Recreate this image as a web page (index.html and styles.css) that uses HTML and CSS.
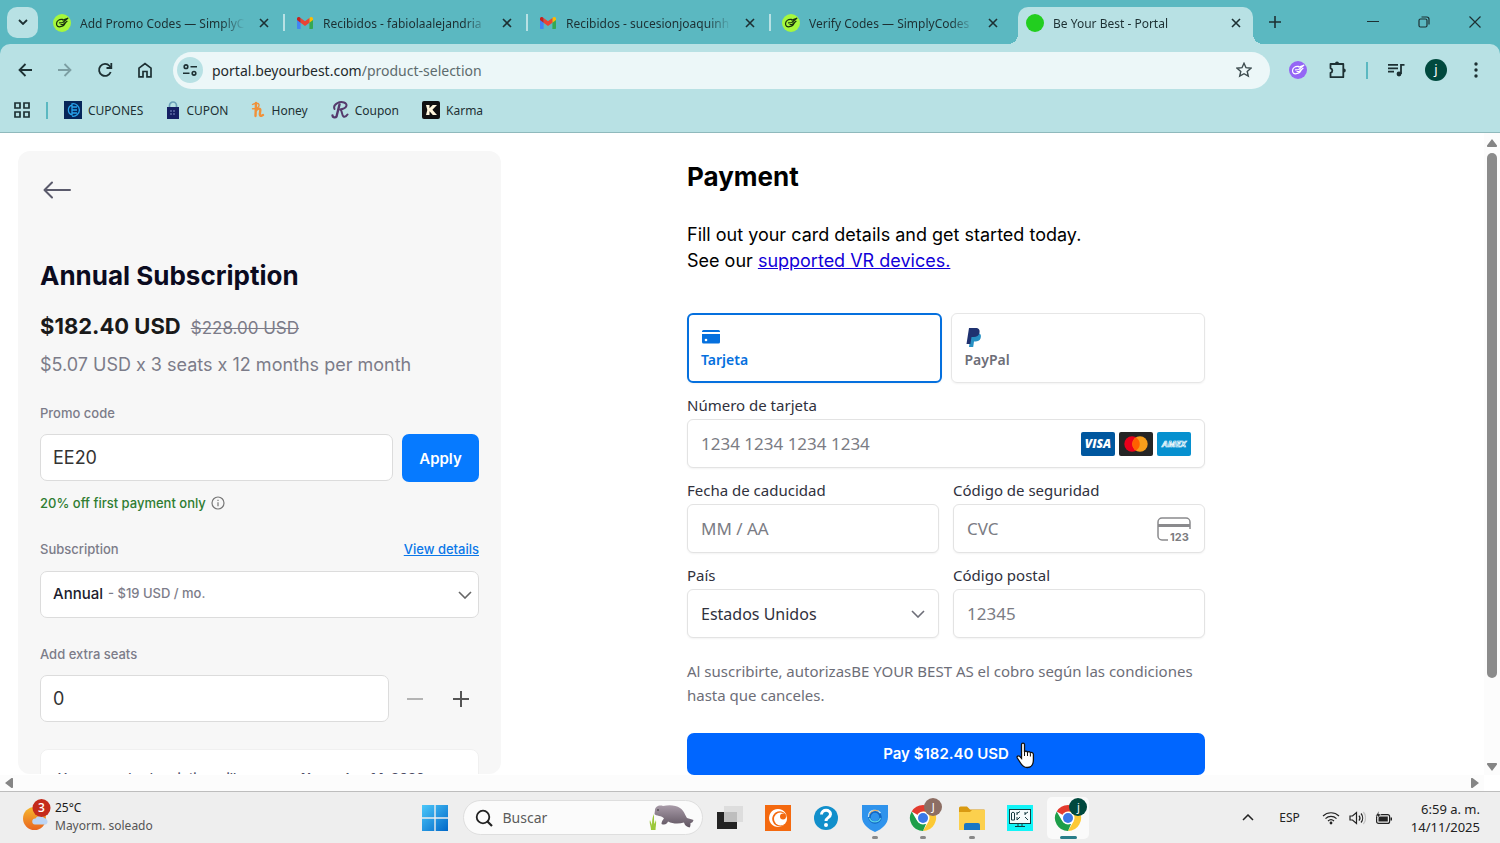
FILE: index.html
```
<!DOCTYPE html>
<html lang="es">
<head>
    <meta charset="UTF-8">
    <meta name="viewport" content="width=device-width, initial-scale=1.0">
    <title>Be Your Best - Portal</title>
    <link rel="stylesheet" href="styles.css">
</head>
<body>
    <!-- shared icons -->
    <svg class="defs" aria-hidden="true">
        <symbol id="close" viewBox="0 0 10 10"><path d="M1 1l8 8M9 1L1 9" fill="none" stroke="#1d3033" stroke-width="1.6"/></symbol>
        <symbol id="hand" viewBox="0 0 18 18"><g fill="none" stroke="currentColor" stroke-width="1.2" stroke-linecap="round" stroke-linejoin="round"><path d="M9.500 5.400C6 5 3.700 7 3.500 9.600c-.1 2.400 1.600 3.500 3.900 3.100 2.600-.4 4.300-2 4.900-4.200"/><path d="M6.500 8.800l3.300-.3 5-4.300-5 1.900M8 10.500l2.500-.2 3.500-3"/></g></symbol>
        <symbol id="gmail" viewBox="0 0 16 12"><path d="M0 2v9c0 .6.400 1 1 1h2.600V4.800z" fill="#4285f4"/><path d="M16 2v9c0 .6-.4 1-1 1h-2.600V4.800z" fill="#34a853"/><path d="M12.400 1v4.700L16 3V1.600c0-1.500-1.600-2-2.600-1.300z" fill="#fbbc04"/><path d="M3.600 5.700V1L8 4.300 12.400 1v4.700L8 9z" fill="#ea4335"/><path d="M0 1.600V3l3.600 2.700V1L2.600.3C1.600-.4 0 .1 0 1.600z" fill="#c5221f"/></symbol>
        <symbol id="chrome" viewBox="0 0 28 28"><circle cx="14" cy="14" r="13" fill="#fff"/><path d="M14 14L2.700 7.500A13 13 0 0 1 25.300 7.500z" fill="#e33b2e"/><path d="M14 7.500h11.300A13 13 0 0 1 14 27l5.600-9.700z" fill="#fcc934"/><path d="M14 27A13 13 0 0 1 2.700 7.500l5.700 9.800 8.600 2.600z" fill="#1e9e4a"/><circle cx="14" cy="14" r="6.500" fill="#fff"/><circle cx="14" cy="14" r="5" fill="#3b78e7"/></symbol>
        <symbol id="chevron" viewBox="0 0 14 8"><path d="M1 1l6 6 6-6" fill="none" stroke="currentColor" stroke-width="1.6"/></symbol>
    </svg>

    <header class="browser">
        <div class="tab-strip">
            <button class="tab-search" aria-label="Buscar pestañas"><svg width="10" height="6" fill="none" stroke="#1d3033" stroke-width="1.800"><path d="M1 1l4 4 4-4"/></svg></button>
            <div class="tab">
                <span class="favicon lime"><svg width="18" height="18"><use href="#hand"/></svg></span>
                <span class="tab-title">Add Promo Codes — SimplyCodes</span>
                <button class="tab-close" aria-label="Cerrar"><svg width="10" height="10"><use href="#close"/></svg></button>
            </div>
            <div class="tab">
                <span class="favicon"><svg width="16" height="12"><use href="#gmail"/></svg></span>
                <span class="tab-title">Recibidos - fabiolaalejandria</span>
                <button class="tab-close" aria-label="Cerrar"><svg width="10" height="10"><use href="#close"/></svg></button>
            </div>
            <div class="tab">
                <span class="favicon"><svg width="16" height="12"><use href="#gmail"/></svg></span>
                <span class="tab-title">Recibidos - sucesionjoaquinh</span>
                <button class="tab-close" aria-label="Cerrar"><svg width="10" height="10"><use href="#close"/></svg></button>
            </div>
            <div class="tab">
                <span class="favicon lime"><svg width="18" height="18"><use href="#hand"/></svg></span>
                <span class="tab-title">Verify Codes — SimplyCodes</span>
                <button class="tab-close" aria-label="Cerrar"><svg width="10" height="10"><use href="#close"/></svg></button>
            </div>
            <div class="tab active">
                <span class="favicon green"></span>
                <span class="tab-title">Be Your Best - Portal</span>
                <button class="tab-close" aria-label="Cerrar"><svg width="10" height="10"><use href="#close"/></svg></button>
            </div>
            <button class="new-tab" aria-label="Nueva pestaña"><svg width="12" height="12"><path d="M6 0v12M0 6h12" stroke="#1d3033" stroke-width="1.600"/></svg></button>
            <div class="window-buttons">
                <button aria-label="Minimizar"><svg width="12" height="12"><path d="M0 5.500h12" stroke="#1d3033"/></svg></button>
                <button aria-label="Restaurar"><svg width="12" height="12" fill="none" stroke="#1d3033" stroke-width="1.200"><rect x="1" y="3" width="8" height="8" rx="1.500"/><path d="M3.500 1h5.300A2.200 2.200 0 0 1 11 3.200v5.300"/></svg></button>
                <button aria-label="Cerrar ventana"><svg width="12" height="12"><path d="M.5.5l11 11M11.500.5l-11 11" stroke="#1d3033" stroke-width="1.200"/></svg></button>
            </div>
        </div>

        <div class="toolbar">
            <button aria-label="Atrás"><svg width="14" height="14" fill="none" stroke="#1d3033" stroke-width="1.800"><path d="M14 7H1.500M7.500 1l-6 6 6 6"/></svg></button>
            <button aria-label="Adelante"><svg width="14" height="14" fill="none" stroke="#7c9ea2" stroke-width="1.800"><path d="M0 7h12.500M6.500 1l6 6-6 6"/></svg></button>
            <button aria-label="Recargar"><svg width="16" height="16" fill="none" stroke="#1d3033" stroke-width="1.800"><path d="M13.700 10A6 6 0 1 1 12.600 4l1.400 1.600"/><path d="M14.300 1v5H9.500"/></svg></button>
            <button aria-label="Inicio"><svg width="16" height="16" fill="none" stroke="#1d3033" stroke-width="1.700"><path d="M2 6.200v8.600h4V9.500h4v5.300h4V6.200L8 1.500z"/></svg></button>
            <div class="url-bar">
                <button class="site-info" aria-label="Información del sitio"><svg width="14" height="12" fill="none" stroke="#1d3033" stroke-width="1.600"><circle cx="3" cy="2.700" r="1.800"/><path d="M7.500 2.700H14M0 9.300h6.500"/><circle cx="11" cy="9.300" r="1.800"/></svg></button>
                <span class="url">portal.beyourbest.com<span>/product-selection</span></span>
                <button class="star" aria-label="Marcador"><svg width="16" height="16" fill="none" stroke="#3c4b4e" stroke-width="1.400"><path d="M8 1.300l2 4.400 4.900.5-3.700 3.200 1.100 4.800L8 11.700l-4.300 2.500 1.100-4.800L1.100 6.200 6 5.700z"/></svg></button>
            </div>
            <button aria-label="SimplyCodes"><span class="favicon purple"><svg width="18" height="18"><use href="#hand"/></svg></span></button>
            <button aria-label="Extensiones"><svg width="20" height="20" fill="none" stroke="#1d3033" stroke-width="1.800" stroke-linejoin="round"><path d="M2.500 4h12.800v13.200H2.500v-4.400a2.300 2.300 0 0 0 0-4.500z"/><path d="M7 3.500a2 2 0 0 1 4 0zM15.800 8.500a2 2 0 0 1 0 4z" fill="#1d3033" stroke="none"/></svg></button>
            <span class="divider"></span>
            <button aria-label="Control multimedia"><svg width="18" height="14" fill="none" stroke="#1d3033" stroke-width="1.800"><path d="M1 1.900h10M1 5.300h10M1 8.700h6M14 11V1.900h3.500"/><circle cx="12" cy="11" r="2.400" fill="#1d3033" stroke="none"/></svg></button>
            <button aria-label="Perfil"><span class="avatar">j</span></button>
            <button aria-label="Menú"><svg width="4" height="16" fill="#1d3033"><circle cx="2" cy="2" r="1.700"/><circle cx="2" cy="8" r="1.700"/><circle cx="2" cy="14" r="1.700"/></svg></button>
        </div>

        <nav class="bookmarks">
            <button class="apps" aria-label="Aplicaciones"><svg width="16" height="16" fill="none" stroke="#1d3033" stroke-width="1.700"><path d="M1 1h5v5H1zM10 1h5v5h-5zM1 10h5v5H1zM10 10h5v5h-5z"/></svg></button>
            <span class="divider"></span>
            <a href="#"><svg width="18" height="18"><path d="M0 0h18v18H0z" fill="#06265a"/><g fill="none" stroke="#28a4ec" stroke-width="1.300"><path d="M8 4.200a5 5 0 0 0 0 9.600V2.800a6.300 6.300 0 1 1 0 12.400M8 6h5M8 9h5M8 12h5"/></g></svg>CUPONES</a>
            <a href="#"><svg width="14" height="18"><path d="M3.500 7V4.500a3.500 3.500 0 0 1 7 0V7" fill="none" stroke="#6aa0b8" stroke-width="1.700"/><path d="M1 6h12v12H1z" fill="#152064"/><path d="M4 10h6M4 13h6" stroke="#8290c4" stroke-dasharray="2 1"/></svg>CUPON</a>
            <a href="#"><svg width="14" height="18" fill="none" stroke="#f0913a" stroke-linecap="round" stroke-linejoin="round"><path d="M5 2L4.500 15M4.800 10c1.800-3 4.800-3.200 4.500-.4-.3 2.300-1.200 5.700 1 5.200l1.700-.8" stroke-width="2.400"/><path d="M1.500 7.700c4 .3 7-1.200 6.500-4C7.500 1.500 4 2 1.500 3.500" stroke-width="1.400"/></svg>Honey</a>
            <a href="#"><svg width="18" height="18" fill="none" stroke="#55396c" stroke-linecap="round" stroke-linejoin="round"><path d="M8.500 3.500L5.500 15.500C4.500 17 1.500 16.500 1.500 14.500" stroke-width="2.400"/><path d="M3.500 8C1.500 3 9 0 13 1.500s3.500 6-4 7c2.500.5 1.500 6 3.500 7s3-.5 4-2" stroke-width="2"/></svg>Coupon</a>
            <a href="#"><svg width="18" height="18"><rect width="18" height="18" rx="2" fill="#111"/><path d="M4 4h3.500v3.300L10.700 4H15l-4.600 4.700L15 14h-4.200L7.500 10.300V14H4l1.300-5z" fill="#fff6dc"/></svg>Karma</a>
        </nav>
    </header>

    <div class="viewport">
        <main class="page">
            <section class="summary">
                <button class="back" aria-label="Back"><svg width="28" height="18" fill="none" stroke="#5b5b6c" stroke-width="2" stroke-linecap="round" stroke-linejoin="round"><path d="M27 9H1.500M9 1.500L1.500 9 9 16.500"/></svg></button>
                <h1>Annual Subscription</h1>
                <p class="price"><strong>$182.40 USD</strong> <del>$228.00 USD</del></p>
                <p class="breakdown">$5.07 USD x 3 seats x 12 months per month</p>

                <div class="label-row"><label for="promo">Promo code</label></div>
                <div class="promo-row">
                    <input class="field" id="promo" type="text" value="EE20">
                    <button class="apply">Apply</button>
                </div>
                <p class="discount">20% off first payment only
                    <svg width="14" height="14" fill="none" stroke="#777" stroke-width="1.200"><circle cx="7" cy="7" r="6"/><path d="M7 6.200v4M7 3.800v1.300"/></svg>
                </p>

                <div class="label-row"><label for="plan">Subscription</label><a href="#">View details</a></div>
                <div class="plan">
                    <select class="field" id="plan"><option>Annual</option></select>
                    <span class="plan-price">- $19 USD / mo.</span>
                    <svg class="arrow" width="14" height="8"><use href="#chevron"/></svg>
                </div>

                <div class="label-row"><label for="seats">Add extra seats</label></div>
                <div class="seats-row">
                    <input class="field" id="seats" type="text" value="0">
                    <button aria-label="Remove seat" disabled><svg width="16" height="16"><path d="M0 8h16" stroke="#b4b4b4" stroke-width="2"/></svg></button>
                    <button aria-label="Add seat"><svg width="16" height="16"><path d="M0 8h16M8 0v16" stroke="#555" stroke-width="2"/></svg></button>
                </div>

                <p class="notice">Your annual subscription will renew on <b>November 14, 2026</b></p>
            </section>

            <section class="payment">
                <h2>Payment</h2>
                <p class="intro">Fill out your card details and get started today.<br>See our <a href="#">supported VR devices.</a></p>

                <div class="methods">
                    <button class="method selected">
                        <svg width="20" height="20" fill="#0570de"><path d="M1 4.500A1.500 1.500 0 0 1 2.500 3h15A1.500 1.500 0 0 1 19 4.500V5H1zM1 7h18v8a1.500 1.500 0 0 1-1.500 1.500h-15A1.500 1.500 0 0 1 1 15z"/><circle cx="5" cy="13" r="1.300" fill="#fff"/></svg>
                        Tarjeta
                    </button>
                    <button class="method">
                        <svg width="18" height="20"><path d="M6 6h7.500c2.700.8 2.800 3.400 2 5.500-.9 2.300-2.800 3-5 3H9L8.200 20H4z" fill="#2790c3"/><path d="M4 1h6.500c3.300 0 4.600 2 4 4.700-.6 3-2.800 4.300-5.700 4.300H6.500L5.400 17H1.500z" fill="#1f3270"/></svg>
                        PayPal
                    </button>
                </div>

                <div class="card-form">
                    <div class="form-group wide">
                        <label for="card">Número de tarjeta</label>
                        <div class="box">
                            <input id="card" type="text" placeholder="1234 1234 1234 1234">
                            <svg width="34" height="24" viewBox="0 0 34 24"><rect width="34" height="24" rx="2" fill="#00579f"/><text class="visa" x="17" y="16" text-anchor="middle">VISA</text></svg>
                            <svg width="34" height="24" viewBox="0 0 34 24"><rect width="34" height="24" rx="2" fill="#252525"/><circle cx="13" cy="12" r="7.700" fill="#eb001b"/><circle cx="21" cy="12" r="7.700" fill="#f79e1b"/><path d="M17 5.400a7.700 7.700 0 0 1 0 13.200 7.700 7.700 0 0 1 0-13.200z" fill="#ff5f00"/></svg>
                            <svg width="34" height="24" viewBox="0 0 34 24"><rect width="34" height="24" rx="2" fill="#0690cf"/><text class="amex" x="17" y="15" text-anchor="middle">AMEX</text></svg>
                        </div>
                    </div>
                    <div class="form-group">
                        <label for="expiry">Fecha de caducidad</label>
                        <div class="box"><input id="expiry" type="text" placeholder="MM / AA"></div>
                    </div>
                    <div class="form-group">
                        <label for="cvc">Código de seguridad</label>
                        <div class="box">
                            <input id="cvc" type="text" placeholder="CVC">
                            <svg width="34" height="26" viewBox="0 0 34 26"><path d="M11 24H5a4 4 0 0 1-4-4V6a4 4 0 0 1 4-4h24a4 4 0 0 1 4 4v7" fill="none" stroke="#8a8a8d" stroke-width="1.500"/><path d="M1 8h32v3H1z" fill="#8a8a8d"/><text class="digits" x="13" y="25">123</text></svg>
                        </div>
                    </div>
                    <div class="form-group">
                        <label for="country">País</label>
                        <div class="box">
                            <select id="country"><option>Estados Unidos</option></select>
                            <svg class="country-arrow" width="14" height="8"><use href="#chevron"/></svg>
                        </div>
                    </div>
                    <div class="form-group">
                        <label for="zip">Código postal</label>
                        <div class="box"><input id="zip" type="text" placeholder="12345"></div>
                    </div>
                </div>

                <p class="terms">Al suscribirte, autorizasBE YOUR BEST AS el cobro según las condiciones hasta que canceles.</p>
                <button class="pay">Pay $182.40 USD
                    <svg class="cursor" width="20" height="27" viewBox="0 0 20 27"><path d="M5.500 2.600c0-2.100 3-2.100 3 0V10c.4-1.200 2.700-1.100 3 .3.700-1 2.600-.8 2.900.6.900-.9 3-.4 3 1.400V18c0 4-2.100 7.500-6.200 7.500-4 0-5.400-2.200-7-5L1.300 16c-.9-1.700 1.200-2.900 2.400-1.600l1.800 2z" fill="#fff" stroke="#111" stroke-width="1.300"/><path d="M8.500 10v4M11.500 11v3M14.400 11.500v3" stroke="#111"/></svg>
                </button>
            </section>
        </main>
        <div class="scroll-y">
            <svg width="10" height="8" fill="#858585"><path d="M5 0l5 6.500a1 1 0 0 1-1 1.500H1a1 1 0 0 1-1-1.500z"/></svg>
            <span class="thumb"></span>
            <svg width="10" height="8" fill="#858585"><path d="M5 8l5-6.500A1 1 0 0 0 9 0H1a1 1 0 0 0-1 1.500z"/></svg>
        </div>
        <div class="scroll-x">
            <svg width="8" height="10" fill="#858585"><path d="M0 5l6.500-5A1 1 0 0 1 8 1v8a1 1 0 0 1-1.500 1z"/></svg>
            <svg width="8" height="10" fill="#858585"><path d="M8 5L1.500 0A1 1 0 0 0 0 1v8a1 1 0 0 0 1.500 1z"/></svg>
        </div>
    </div>

    <footer class="taskbar">
        <button class="weather">
            <svg width="28" height="32" viewBox="0 0 28 32"><defs><linearGradient id="sun" x1="0" y1="0" x2="0" y2="1"><stop offset="0" stop-color="#f6b82e"/><stop offset="1" stop-color="#e8641f"/></linearGradient></defs><circle cx="11.500" cy="19.500" r="11.500" fill="url(#sun)"/><path d="M12 25.500a3 3 0 0 1 .5-6 5 5 0 0 1 8.500-.5 3.400 3.400 0 0 1 1.500 6.500z" fill="#bcd5f5"/><circle cx="18.500" cy="9" r="9" fill="#c42b1c"/><text class="badge" x="18.500" y="13" text-anchor="middle">3</text></svg>
            <span class="weather-text"><b>25°C</b>Mayorm. soleado</span>
        </button>

        <div class="dock">
            <button aria-label="Inicio"><svg width="26" height="26"><defs><linearGradient id="win" x1="0" y1="0" x2="1" y2="1"><stop offset="0" stop-color="#4cc8fa"/><stop offset="1" stop-color="#0067c8"/></linearGradient></defs><path d="M0 0h12.300v12.300H0zM13.700 0H26v12.300H13.700zM0 13.700h12.300V26H0zM13.700 13.700H26V26H13.700z" fill="url(#win)"/></svg></button>
            <div class="search">
                <svg width="18" height="18" fill="none" stroke="#222" stroke-width="1.800"><circle cx="8" cy="8" r="6.300"/><path d="M12.500 12.500l4.500 4.500" stroke-width="2.200"/></svg>
                <input type="text" placeholder="Buscar" aria-label="Buscar">
                <svg width="46" height="28" viewBox="0 0 46 28"><defs><linearGradient id="seal" x1="0" y1="0" x2="0" y2="1"><stop offset="0" stop-color="#a99ca9"/><stop offset="1" stop-color="#5e535f"/></linearGradient></defs><path d="M2 26c0-4-2-7-1-10 1 3 2 4 2 6 0-4 0-8 2-12 0 5 0 8 .5 10L7 16c.5 4-.5 7-.5 10z" fill="#9cc83a"/><path d="M6 6c0-3 4-5.500 8-4 6-1.500 13-1 17 2 4 2.500 5 7 7 10 2 1 5 1 6.500 2-.5 2-1.500 3-3 3 0 2 0 3.500-1 4.500-3-.5-5-2.500-5.500-5-5 1.500-11 1.500-16-1-.5 2-3 4-6.500 2.500 0-2 1-4 2.500-5.500C13 11 7 12.500 5.500 10z" fill="url(#seal)"/><circle cx="9" cy="6" r=".8" fill="#222"/></svg>
            </div>
            <div class="apps-row">
                <button class="app" aria-label="Vista de tareas"><svg width="28" height="26"><path d="M1 7h20v17H1z" fill="#232323"/><path d="M8 1h19v16H8z" fill="#d9d9d9" opacity=".85"/></svg></button>
                <button class="app" aria-label="Crunchyroll"><svg width="26" height="26"><path d="M0 0h26v26H0z" fill="#f4690f"/><path d="M21.700 15.500A9 9 0 1 1 22 12a7.500 7.500 0 1 0-5 9 9 9 0 0 0 4.700-5.500z" fill="#fff"/><circle cx="15.500" cy="14" r="6.500" fill="#fff"/><circle cx="18" cy="11.500" r="3" fill="#f4690f"/></svg></button>
                <button class="app" aria-label="Ayuda"><svg width="26" height="26"><circle cx="13" cy="13" r="12" fill="#118fcb"/><path d="M8.500 9.500C8.500 3.800 17.700 4 17.500 9.300c-.1 3.500-4.500 3.200-4.500 6.700" fill="none" stroke="#fff" stroke-width="3"/><circle cx="13" cy="20" r="2" fill="#fff"/></svg></button>
                <button class="app running" aria-label="VPN"><svg width="26" height="28"><path d="M0 1h26v12c0 7-6 12-13 15C6 25 0 20 0 13z" fill="#2f93ec"/><circle cx="13" cy="13" r="5.500" fill="none" stroke="#1267c4" stroke-width="2.500"/><path d="M6.500 13c0-8 9-8 12-4" fill="none" stroke="#bfe6fa" stroke-width="1.300"/><path d="M7.500 14c1.500 5 9 5.500 11 0" fill="none" stroke="#58d1e8" stroke-width="1.300"/><path d="M7.500 10c2-3.500 6-4.500 9-3" fill="none" stroke="#f2a54a"/></svg></button>
                <button class="app running" aria-label="Google Chrome"><svg width="28" height="28"><use href="#chrome"/></svg><span class="profile brown">J</span></button>
                <button class="app running" aria-label="Explorador de archivos"><svg width="28" height="24"><path d="M1 2a1.500 1.500 0 0 1 1.500-1.500H9l3 3h14.500V12H1z" fill="#d99a12"/><path d="M1 6h11l2-2h13v20H1z" fill="#fcd04d"/><path d="M6 24v-5a2 2 0 0 1 2-2h12a2 2 0 0 1 2 2v5z" fill="#1976c4"/></svg></button>
                <button class="app" aria-label="Pantalla"><svg width="26" height="26"><path d="M0 0h26v26H0z" fill="#12f4f7"/><g fill="none" stroke="#163c40"><rect x="2.500" y="4.500" width="21" height="14" fill="#f5fbfb"/><path d="M8 21.500h10M11 18.500v3M15 18.500v3M10 7v3M10 8.500l3-2M18 9l3-2M18 7v3M10 12v3l3-3M18 12l3 3M4.500 8a2 2 0 0 1 3 0v7h-3z"/></g></svg></button>
                <button class="app current" aria-label="Google Chrome"><svg width="28" height="28"><use href="#chrome"/></svg><span class="profile dark">j</span></button>
            </div>
        </div>

        <div class="tray">
            <button aria-label="Iconos ocultos"><svg width="12" height="7"><path d="M1 6l5-5 5 5" fill="none" stroke="#222" stroke-width="1.500"/></svg></button>
            <span class="lang">ESP</span>
            <button class="status" aria-label="Red, volumen y batería">
                <svg width="18" height="14" fill="none" stroke="#222" stroke-width="1.200"><path d="M1 5a11.500 11.500 0 0 1 16 0M3.500 7.600a8 8 0 0 1 11 0M6 10a4.500 4.500 0 0 1 6 0"/><circle cx="9" cy="12" r="1.400" fill="#222" stroke="none"/></svg>
                <svg width="17" height="14" fill="none" stroke="#222" stroke-width="1.200"><path d="M1 5h2.500L7.500 1.500v11L3.500 9H1z"/><path d="M10 4.500a4 4 0 0 1 0 5M12 2.500a7 7 0 0 1 0 9"/><path d="M14.300 1a9 9 0 0 1 0 12" stroke="#c4c4c4"/></svg>
                <svg width="18" height="14"><rect x="1.600" y="3.600" width="13" height="8.800" rx="2" fill="none" stroke="#222" stroke-width="1.200"/><path d="M3.500 5.500h9.300v5H3.500zM15.500 6.500H17v3h-1.500z" fill="#222"/><path d="M4 0L.5 5H3L2.300 8 6 3H3.700z" fill="#222" stroke="#eee" stroke-width=".5"/></svg>
            </button>
            <div class="clock"><span>6:59 a. m.</span><span>14/11/2025</span></div>
        </div>
    </footer>
</body>
</html>
```
FILE: styles.css
```
* { box-sizing: border-box; }
body { margin: 0; height: 100vh; display: flex; flex-direction: column; overflow: hidden; font-family: "Noto Sans", "Open Sans", sans-serif; font-size: 13px; color: #1d3033; background: #fff; }
h1, h2, p { margin: 0; }
button { padding: 0; border: none; background: none; font: inherit; color: inherit; cursor: pointer; display: flex; align-items: center; justify-content: center; }
input, select { font: inherit; color: inherit; outline: none; min-width: 0; }
select { appearance: none; }
svg { flex: none; }
.defs { position: absolute; width: 0; height: 0; }

/* browser chrome */
.browser { flex: none; background: #5bb8c1; border-bottom: 1px solid #8fb9bc; }
.tab-strip { display: flex; align-items: center; height: 44px; padding-left: 7px; }
.tab-search { width: 31px; height: 31px; border-radius: 10px; background: #b8e1e4; margin-right: 6px; }
.tab { position: relative; flex: 0 1 243px; min-width: 0; display: flex; align-items: center; height: 37px; margin-top: 7px; padding: 0 18px 5px 9px; font-size: 12px; }
.tab:not(.active)::after { content: ""; position: absolute; right: 2px; top: 7px; width: 2px; height: 17px; background: #b8e1e4; }
.tab:nth-of-type(4)::after { display: none; }
.tab.active { flex-basis: 235px; margin-left: 2px; border-radius: 10px 10px 0 0; background: #b8e1e4; padding-right: 12px; padding-left: 8px; }
.tab.active::before, .tab.active::after { content: ""; position: absolute; bottom: 0; width: 10px; height: 10px; }
.tab.active::before { left: -10px; background: radial-gradient(circle at 0 0, transparent 10px, #b8e1e4 10px); }
.tab.active::after { right: -10px; background: radial-gradient(circle at 100% 0, transparent 10px, #b8e1e4 10px); }
.favicon { flex: none; width: 18px; height: 18px; border-radius: 50%; display: flex; align-items: center; justify-content: center; }
.lime { background: #a6f83c; color: #18300c; }
.green { background: #22ce1f; }
.purple { background: #9466f5; color: #fff; }
.tab-title { flex: 1; min-width: 0; margin: 0 14px 0 9px; white-space: nowrap; overflow: hidden; mask-image: linear-gradient(to right, #000 86%, transparent); }
.tab-close { width: 10px; height: 20px; }
.new-tab { width: 32px; height: 32px; margin-left: 6px; }
.window-buttons { display: flex; margin-left: auto; }
.window-buttons button { width: 51px; height: 44px; }

.toolbar { display: flex; align-items: center; gap: 10px; height: 52px; padding: 0 9px 0 10px; background: #b8e1e4; border-radius: 10px 10px 0 0; }
.toolbar > button { width: 30px; height: 30px; }
.url-bar { flex: 1; display: flex; align-items: center; height: 37px; margin: 0 3px; padding: 0 18px 0 4px; border-radius: 19px; background: #ecf7f8; }
.site-info { width: 26px; height: 26px; border-radius: 50%; background: #b8e1e4; }
.url { margin-left: 9px; font-size: 14px; color: #1f2a2c; }
.url span { color: #5d6b6e; }
.star { margin-left: auto; }
.divider { width: 2px; height: 17px; margin: 0 3px; background: #5bb8c1; }
.avatar { width: 22px; height: 22px; line-height: 20px; border-radius: 50%; background: #00493e; color: #fff; }

.bookmarks { display: flex; align-items: center; gap: 23px; height: 36px; padding: 0 14px 8px; background: #b8e1e4; }
.bookmarks .divider { margin: 0 -7px; }
.bookmarks a { display: flex; align-items: center; gap: 6px; color: inherit; text-decoration: none; font-size: 12px; }

/* page area */
.viewport { flex: 1; min-height: 0; display: grid; grid-template-columns: 1fr 16px; grid-template-rows: 1fr 16px; }
.page { display: flex; gap: 186px; min-height: 0; padding: 18px 18px 0; overflow: hidden; font-family: Inter, sans-serif; }
.scroll-y { display: flex; flex-direction: column; align-items: center; gap: 6px; padding: 6px 0 4px; background: #fcfcfc; }
.scroll-y .thumb { width: 10px; flex: 0 1 83%; margin-bottom: auto; border-radius: 5px; background: #8b8b8b; }
.scroll-x { display: flex; align-items: center; justify-content: space-between; padding: 0 5px; background: #fcfcfc; }

.summary { flex: 0 1 483px; min-height: 0; padding: 19px 22px 0; margin-bottom: 1px; border-radius: 12px; background: #f7f7f7; overflow: hidden; color: #7c7c89; }
.back { height: 40px; width: 34px; }
.summary h1 { margin-top: 49px; font-size: 26px; line-height: 34px; font-weight: 700; color: #0b0b1f; }
.price { display: flex; align-items: baseline; gap: 10px; margin-top: 18px; line-height: 30px; font-size: 17px; }
.price strong { font-size: 22px; font-weight: 700; color: #1a1a1a; }
.breakdown { margin-top: 10px; font-size: 18px; line-height: 24px; }
.label-row { display: flex; justify-content: space-between; margin: 26px 0 11px; font-size: 13px; line-height: 20px; font-weight: 500; }
.label-row a { color: #0b78e8; }
.field { width: 100%; height: 47px; padding: 0 12px; border: 1px solid #dcdcdc; border-radius: 7px; background: #fff; font-size: 18px; color: #333; }
.promo-row { display: flex; gap: 9px; }
.apply { flex: none; width: 77px; height: 48px; border-radius: 7px; background: #067aff; color: #fff; font-size: 15px; font-weight: 600; }
.discount { display: flex; align-items: center; gap: 5px; margin-top: 11px; font-size: 13px; line-height: 20px; font-weight: 500; color: #2f7d32; }
.plan { position: relative; margin-top: 12px; }
.plan .field { font-size: 15px; font-weight: 500; color: #1b1b2c; padding-bottom: 3px; }
.plan-price { position: absolute; left: 68px; top: 12px; font-size: 13px; line-height: 20px; font-weight: 500; pointer-events: none; }
.plan .arrow { position: absolute; right: 7px; top: 20px; color: #666; pointer-events: none; }
.seats-row { display: flex; gap: 6px; margin-right: -2px; }
.seats-row button { flex: none; width: 40px; }
.notice { margin-top: 27px; padding: 18px 17px; border: 1px solid #f0f0f0; border-radius: 8px; background: #fff; font-size: 13px; line-height: 20px; font-weight: 500; color: #4d4d66; white-space: nowrap; }

.payment { flex: 0 1 518px; min-width: 0; color: #000; }
.payment h2 { margin-top: 9px; font-size: 26px; line-height: 34px; font-weight: 700; }
.intro { margin-top: 28px; font-size: 18px; line-height: 26px; }
.intro a { color: #1200d8; }
.methods, .card-form, .terms { font-family: "Noto Sans", "Open Sans", sans-serif; }
.methods { display: flex; gap: 9px; margin: 39px 0 12px; }
.method { flex: 1; height: 70px; flex-direction: column; align-items: flex-start; gap: 3px; padding: 0 13px; border: 1px solid #e6e6e6; border-radius: 6px; box-shadow: 0 1px 2px rgba(0,0,0,0.05); font-size: 14px; line-height: 20px; font-weight: 600; color: #6d6e78; }
.method.selected { border: 2px solid #0570de; color: #0570de; padding: 0 12px; }
.card-form { display: grid; grid-template-columns: 1fr 1fr; gap: 12px 14px; }
.wide { grid-column: span 2; }
.form-group label { display: block; margin-bottom: 3px; font-size: 15px; line-height: 21px; color: #30313d; }
.box { display: flex; align-items: center; gap: 4px; height: 49px; padding: 0 13px; border: 1px solid #e3e3e3; border-radius: 6px; box-shadow: 0 1px 2px rgba(0,0,0,0.05); background: #fff; color: #30313d; }
.box input, .box select { flex: 1; width: 100%; height: 100%; padding: 0; border: none; background: transparent; font-size: 16px; }
.box input { font-size: 17px; }
.box input::placeholder { color: #7b7c84; opacity: 1; }
.country-arrow { color: #6d6e78; }
.visa { font: italic 800 12px "Open Sans", sans-serif; fill: #fff; }
.amex { font: italic 700 9px "Open Sans", sans-serif; fill: none; stroke: #fff; stroke-width: 0.7; }
.digits { font: 700 11px Inter, sans-serif; fill: #7c7c80; }
.terms { margin-top: 21px; font-size: 15px; line-height: 24px; color: #6d6e78; }
.pay { position: relative; width: 100%; height: 42px; margin-top: 26px; border-radius: 7px; background: #0066ff; color: #fff; font-size: 15px; line-height: 20px; font-weight: 600; }
.cursor { position: absolute; left: 329px; top: 9px; }

/* taskbar */
.taskbar { flex: none; display: grid; grid-template-columns: 1fr auto 1fr; align-items: center; height: 52px; padding: 0 20px 0 23px; border-top: 1px solid #bdbdbd; background: #eee; color: #222; font-size: 12px; }
.weather { justify-self: start; align-items: flex-start; gap: 4px; padding-bottom: 2px; }
.weather-text { display: flex; flex-direction: column; align-items: flex-start; line-height: 18px; color: #555; }
.weather-text b { font-weight: 400; color: #1a1a1a; }
.badge { font: 600 12px "Open Sans", sans-serif; fill: #fff; }
.dock { display: flex; align-items: center; margin-left: 8px; }
.search { display: flex; align-items: center; width: 240px; height: 35px; margin: 0 6px 0 15px; padding: 0 7px 0 11px; border: 1px solid #dedede; border-radius: 18px; background: #fbfbfb; }
.search input { flex: 1; width: 100%; margin-left: 10px; padding: 0; border: none; background: none; font-size: 14px; }
.search input::placeholder { color: #5c5c5c; opacity: 1; }
.apps-row { display: flex; justify-content: space-between; width: 381px; }
.app { position: relative; width: 42px; height: 42px; border-radius: 5px; }
.app.current { background: #fafafa; }
.running::after, .current::after { content: ""; position: absolute; bottom: 0; width: 6px; height: 3px; border-radius: 2px; background: #888; }
.current::after { width: 17px; background: #287d89; }
.profile { position: absolute; top: 1px; right: 2px; width: 18px; height: 18px; border-radius: 50%; color: #fff; font-size: 11px; line-height: 17px; text-align: center; }
.brown { background: #8d6e63; }
.dark { background: #00493e; }
.tray { justify-self: end; display: flex; align-items: center; }
.lang { margin: 0 22px 0 25px; }
.status { gap: 9px; }
.clock { display: flex; flex-direction: column; align-items: flex-end; font-size: 13px; line-height: 18px; margin-left: 18px; }
```
